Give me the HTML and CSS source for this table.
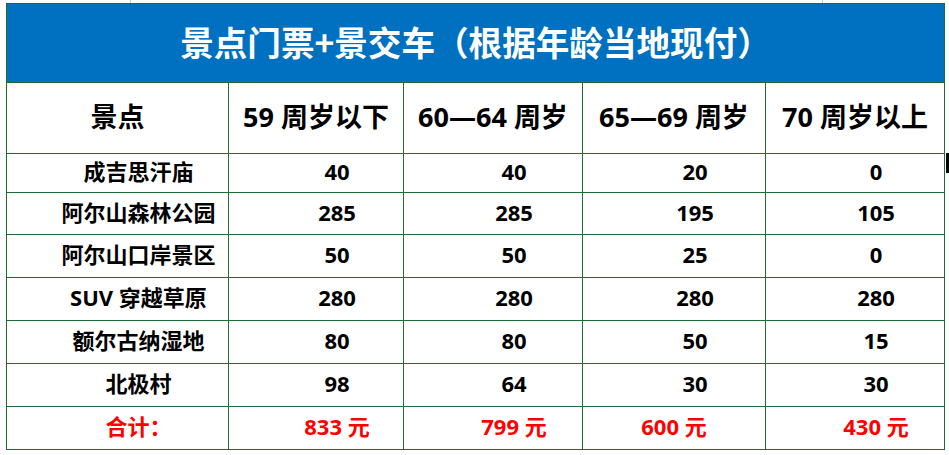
FILE: index.html
```html
<!DOCTYPE html>
<html lang="zh-CN">
<head>
<meta charset="utf-8">
<title>景点门票+景交车</title>
<link rel="stylesheet" href="styles.css">
</head>
<body>
<div class="sheet">
  <div class="price-table">
    <div class="title">景点门票+景交车（根据年龄当地现付）</div>
    <div class="cell head">景点</div>
    <div class="cell head">59 周岁以下</div>
    <div class="cell head">60—64 周岁</div>
    <div class="cell head">65—69 周岁</div>
    <div class="cell head">70 周岁以上</div>

    <div class="cell r1">成吉思汗庙</div>
    <div class="cell r1">40</div>
    <div class="cell r1">40</div>
    <div class="cell r1">20</div>
    <div class="cell r1">0</div>

    <div class="cell">阿尔山森林公园</div>
    <div class="cell">285</div>
    <div class="cell">285</div>
    <div class="cell">195</div>
    <div class="cell">105</div>

    <div class="cell">阿尔山口岸景区</div>
    <div class="cell">50</div>
    <div class="cell">50</div>
    <div class="cell">25</div>
    <div class="cell">0</div>

    <div class="cell">SUV 穿越草原</div>
    <div class="cell">280</div>
    <div class="cell">280</div>
    <div class="cell">280</div>
    <div class="cell">280</div>

    <div class="cell">额尔古纳湿地</div>
    <div class="cell">80</div>
    <div class="cell">80</div>
    <div class="cell">50</div>
    <div class="cell">15</div>

    <div class="cell">北极村</div>
    <div class="cell">98</div>
    <div class="cell">64</div>
    <div class="cell">30</div>
    <div class="cell">30</div>

    <div class="cell total">合计：</div>
    <div class="cell total">833 元</div>
    <div class="cell total">799 元</div>
    <div class="cell total centered">600 元</div>
    <div class="cell total">430 元</div>
  </div>
  <div class="cursor-mark"></div>
</div>
</body>
</html>
```

FILE: styles.css
```css
html, body {
  margin: 0;
  padding: 0;
  background: #ffffff;
}

.sheet {
  position: relative;
  width: 949px;
  height: 455px;
  padding: 3px 0 0 6px;
  box-sizing: border-box;
  background:
    linear-gradient(#c8c8c8, #c8c8c8) 130px 0 / 1px 3px no-repeat,
    linear-gradient(#c8c8c8, #c8c8c8) 822px 0 / 1px 3px no-repeat,
    #ffffff;
  font-family: "Open Sans", "Noto Sans CJK SC", sans-serif;
  font-weight: 700;
  color: #000;
}

.price-table {
  display: grid;
  width: 939px;
  grid-template-columns: 221px 174px 178px 182px 178px;
  grid-template-rows: 78px 70px 38px 41px 42px 42px 42px 42px 42px;
  gap: 1px;
  padding: 1px;
  box-sizing: border-box;
  background: #1e6b33;
}

.title {
  grid-column: 1 / -1;
  background: #0070c0;
  color: #ffffff;
  font-family: "Noto Sans CJK SC", sans-serif;
  font-size: 33.6px;
  line-height: 1;
  display: flex;
  align-items: center;
  justify-content: center;
  padding-bottom: 2px;
}

.cell {
  background: #ffffff;
  display: flex;
  align-items: center;
  justify-content: center;
  font-size: 22px;
  line-height: 1;
  padding-left: 42px;
  padding-bottom: 4px;
  white-space: nowrap;
}

.head {
  font-size: 27px;
  padding-left: 0;
  padding-bottom: 4px;
}

.total {
  color: #ff0000;
}

.total.centered {
  padding-left: 0;
}

.cursor-mark {
  position: absolute;
  left: 946px;
  top: 153px;
  width: 3px;
  height: 20px;
  background: #000;
}
```
